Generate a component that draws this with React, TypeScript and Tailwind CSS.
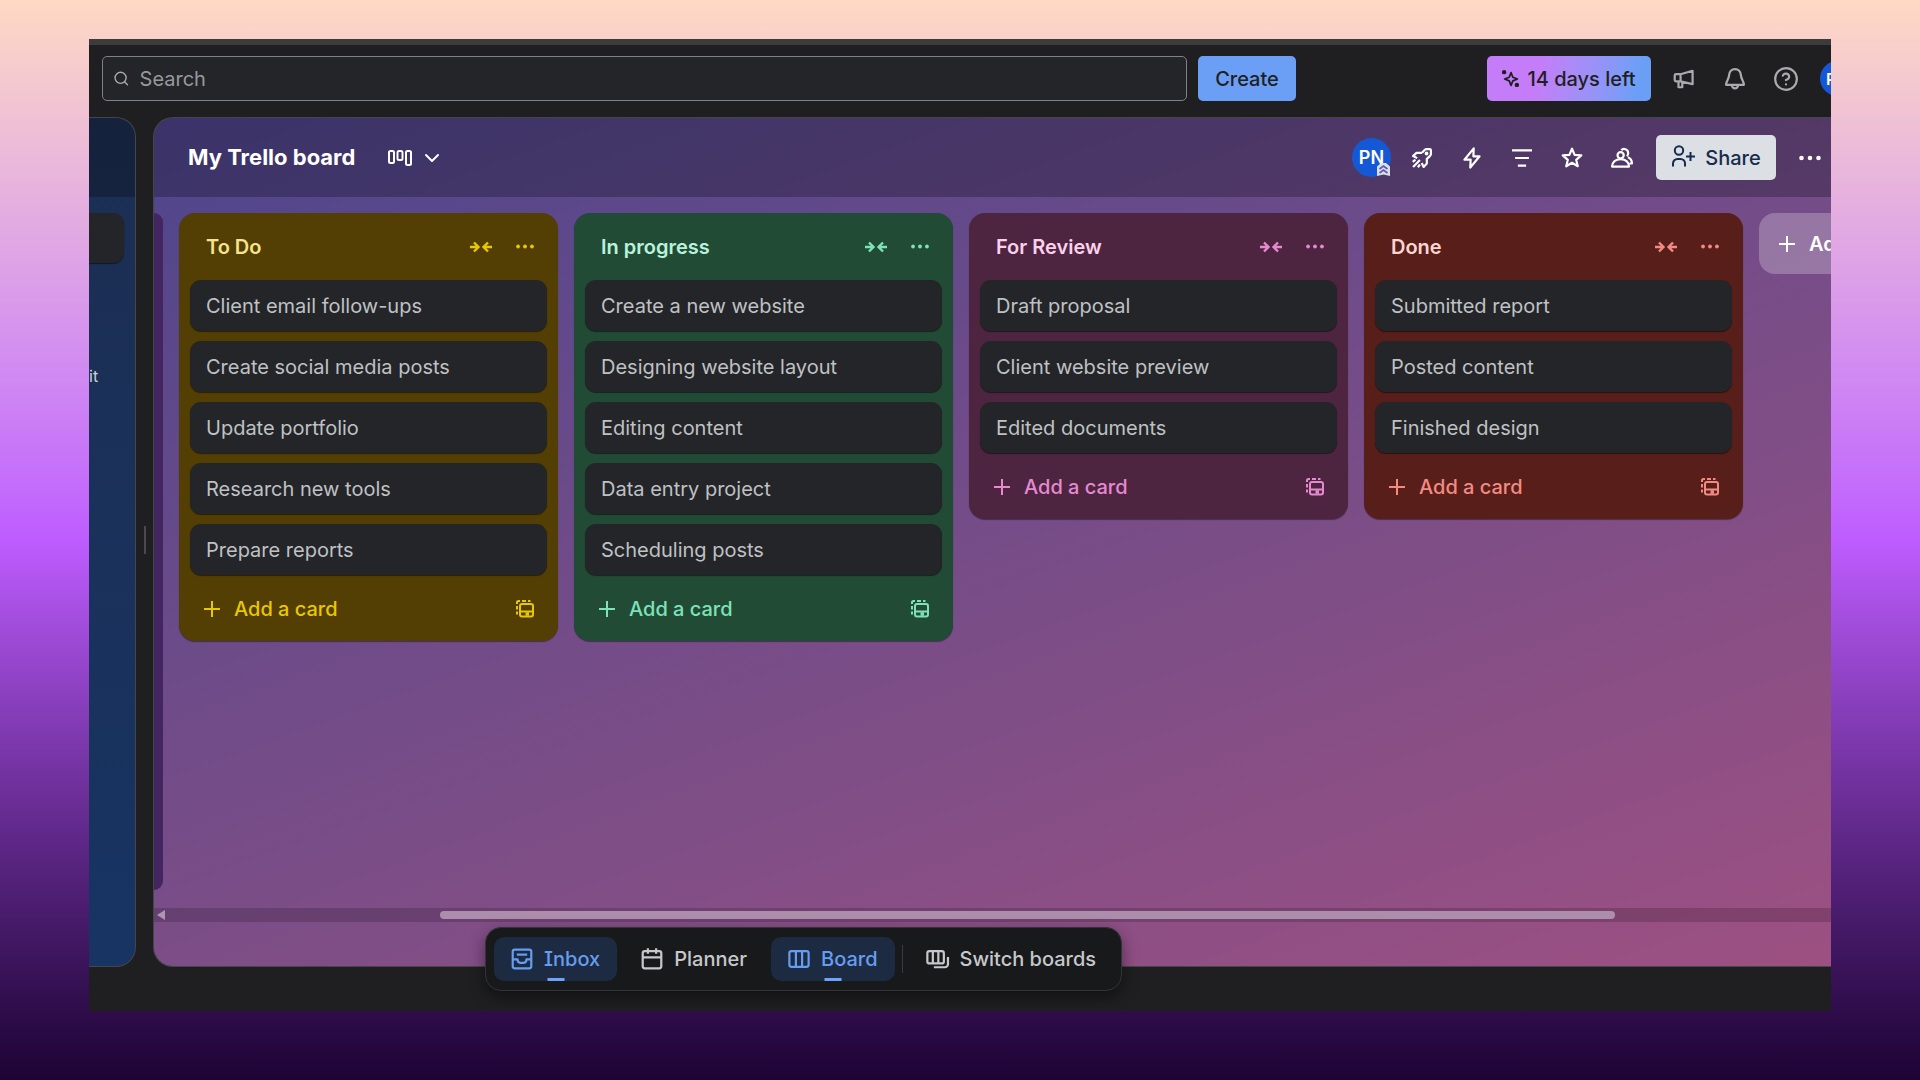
import type { ReactNode } from "react";
import { ChevronDown, CircleHelp, Search } from "lucide-react";

const lists = [
  {
    name: "To Do",
    bg: "bg-[#533f04]",
    title: "text-[#f5e489]",
    accent: "text-[#e8c800]",
    cards: [
      "Client email follow-ups",
      "Create social media posts",
      "Update portfolio",
      "Research new tools",
      "Prepare reports",
    ],
  },
  {
    name: "In progress",
    bg: "bg-[#224b36]",
    title: "text-[#baf3db]",
    accent: "text-[#7ee2b8]",
    cards: [
      "Create a new website",
      "Designing website layout",
      "Editing content",
      "Data entry project",
      "Scheduling posts",
    ],
  },
  {
    name: "For Review",
    bg: "bg-[#4d2540]",
    title: "text-[#fdd0ec]",
    accent: "text-[#e68ad0]",
    cards: ["Draft proposal", "Client website preview", "Edited documents"],
  },
  {
    name: "Done",
    bg: "bg-[#581e1a]",
    title: "text-[#ffd5d2]",
    accent: "text-[#f38b82]",
    cards: ["Submitted report", "Posted content", "Finished design"],
  },
];

function Icon({ children, className = "size-[22px]" }: { children: ReactNode; className?: string }) {
  return (
    <svg
      viewBox="0 0 16 16"
      fill="none"
      stroke="currentColor"
      strokeWidth="1.6"
      strokeLinejoin="round"
      className={`shrink-0 overflow-visible ${className}`}
      aria-hidden="true"
    >
      {children}
    </svg>
  );
}

function Dots({ className }: { className: string }) {
  return (
    <svg viewBox="0 0 22 6" fill="currentColor" className={className} aria-hidden="true">
      <circle cx="2.5" cy="3" r="2.3" />
      <circle cx="11" cy="3" r="2.3" />
      <circle cx="19.5" cy="3" r="2.3" />
    </svg>
  );
}

function PlusIcon() {
  return (
    <svg viewBox="0 0 16 16" stroke="currentColor" strokeWidth="2" className="size-4 shrink-0" aria-hidden="true">
      <path d="M8 0v16M0 8h16" />
    </svg>
  );
}

function CollapseIcon() {
  return (
    <svg viewBox="0 0 22 12" fill="none" stroke="currentColor" strokeWidth="2.4" className="h-3 w-[22px]" aria-hidden="true">
      <path d="M0 6h8.500M4 1.500 8.500 6 4 10.500M22 6h-8.500M18 1.500 13.500 6l4.500 4.500" />
    </svg>
  );
}

function TemplateIcon() {
  return (
    <svg viewBox="0 0 18 18" fill="none" stroke="currentColor" className="size-[18px]" aria-hidden="true">
      <path d="M1 4V2.500A1.500 1.500 0 0 1 2.500 1H4M6 1h4M12 1h2.500M1 6v3.500M1 11.500v3" strokeWidth="2" />
      <rect x="4" y="4" width="13" height="12.500" rx="2" strokeWidth="2" />
      <path d="M4 11.500h13" strokeWidth="2" />
      <path d="M9.500 14h3.500" strokeWidth="3.500" />
    </svg>
  );
}

function BoardList({ list }: { list: (typeof lists)[number] }) {
  return (
    <section className={`w-[379px] shrink-0 rounded-2xl px-[11px] pb-[10px] shadow-[0_1px_1px_rgba(0,0,0,0.4)] ${list.bg}`}>
      <div className="flex h-[67px] items-center pl-4">
        <h2 className={`flex-1 text-xl font-semibold ${list.title}`}>{list.name}</h2>
        <button aria-label="Collapse list" className={`flex h-11 w-[45px] items-center justify-center ${list.accent}`}>
          <CollapseIcon />
        </button>
        <button aria-label="List actions" className={`flex h-11 w-11 items-center justify-center ${list.accent}`}>
          <Dots className="h-[5px] w-[18px]" />
        </button>
      </div>
      <ul className="flex flex-col gap-[10px]">
        {list.cards.map((card) => (
          <li
            key={card}
            className="flex h-[51px] items-center rounded-[11px] bg-[#242528] px-4 text-xl text-[#bfc1c4] shadow-[0_1px_1px_rgba(0,0,0,0.5)]"
          >
            {card}
          </li>
        ))}
      </ul>
      <div className={`mt-[11px] flex h-[45px] items-center ${list.accent}`}>
        <button className="flex h-full flex-1 items-center gap-[14px] pl-[14px] text-xl font-medium">
          <PlusIcon />
          Add a card
        </button>
        <button aria-label="Create from template" className="flex h-full w-11 items-center justify-center">
          <TemplateIcon />
        </button>
      </div>
    </section>
  );
}

function TopBar() {
  return (
    <header className="-mr-6 flex h-[72px] shrink-0 items-center pb-[5px] pl-[13px] text-[#a9abaf]">
      <label className="flex h-[45px] flex-1 items-center gap-[10px] rounded-[5px] border border-[#7e8188] bg-[#242528] px-[10px]">
        <Search className="size-[17px]" strokeWidth={2} />
        <input
          type="text"
          aria-label="Search"
          placeholder="Search"
          className="w-full bg-transparent text-xl outline-none placeholder:text-[#96999e]"
        />
      </label>
      <button className="ml-[11px] h-[45px] w-[98px] rounded-[5px] bg-[#6b9ff6] text-xl font-medium text-[#1f1f21]">
        Create
      </button>
      <button className="ml-[191px] flex h-[45px] w-[164px] items-center justify-center gap-2 rounded-[5px] bg-linear-100 from-[#c57cf8] from-30% to-[#6b9ff6] to-90% text-xl font-medium text-[#1f1f21]">
        <Icon className="size-[17px]">
          <path d="M8.500 2.500l1.700 4.300 4.300 1.700-4.300 1.700-1.700 4.300-1.700-4.300-4.300-1.700 4.300-1.700z" />
          <circle cx="2" cy="2" r="1.300" fill="currentColor" />
          <circle cx="14" cy="14" r="1.300" fill="currentColor" />
        </Icon>
        14 days left
      </button>
      <button aria-label="What's new" className="ml-2 flex w-[50px] justify-center">
        <Icon>
          <path d="M5.500 4.500 14.250 2v9.750L5.500 9.750H2.250a1 1 0 0 1-1-1V5.500a1 1 0 0 1 1-1zM5.500 4.500v5.250M4 10v4h2.750v-3.750" />
        </Icon>
      </button>
      <button aria-label="Notifications" className="flex w-[51px] justify-center">
        <Icon>
          <path d="M8 .750C5.500.750 3.900 2.600 3.750 5 3.600 8 1.500 9.750 1.500 12.250h13C14.500 9.750 12.400 8 12.250 5 12.100 2.600 10.500.750 8 .750z" />
          <path d="M5.750 12.500a2.250 2.250 0 0 0 4.500 0" />
        </Icon>
      </button>
      <button aria-label="Help" className="flex w-[51px] justify-center">
        <CircleHelp className="size-[26px]" strokeWidth={2} />
      </button>
      <button
        aria-label="Account"
        className="ml-[9px] flex size-[35px] shrink-0 items-center rounded-full bg-[#1558d6] pl-[6px] text-base font-semibold text-white"
      >
        PN
      </button>
    </header>
  );
}

function BoardHeader() {
  return (
    <div className="flex h-[79px] shrink-0 items-center bg-black/25 pl-[34px] text-white">
      <h1 className="text-[22px] font-bold">My Trello board</h1>
      <button aria-label="Views" className="ml-[33px] flex items-center gap-2">
        <svg viewBox="0 0 24 18" fill="none" stroke="currentColor" strokeWidth="2" className="h-[18px] w-6" aria-hidden="true">
          <rect x="1" y="2" width="5" height="12" rx="1.500" />
          <rect x="9.500" y="2" width="5" height="9" rx="1.500" />
          <rect x="18" y="2" width="5" height="14" rx="1.500" />
        </svg>
        <ChevronDown className="size-6" strokeWidth={2} />
      </button>

      <div className="ml-auto flex items-center">
        <div className="relative mr-[6px] flex size-[39px] items-center justify-center rounded-full bg-[#1558d6] text-lg font-semibold">
          PN
          <svg viewBox="0 0 13 13" className="absolute right-[1px] bottom-[1px] size-[13px]" aria-hidden="true">
            <path d="M0 3.500 4 0h5l4 3.500V13L6.500 11.500 0 13z" fill="#dcdfe8" />
            <path d="M2.500 6 6.500 3l4 3M2.500 10l4-3 4 3" fill="none" stroke="#5e5bb5" strokeWidth="1.700" />
          </svg>
        </div>
        <button aria-label="Power-Ups" className="flex w-[50px] justify-center">
          <Icon>
            <path d="M8 4.250 9.700 2.300A2 2 0 0 1 11.200 1.500h2.300a1 1 0 0 1 1 1v2.600a2 2 0 0 1-.8 1.500l-2.200 2V12L9.200 14.500 7.800 11.600M8 4.250H4L1.500 6.600l3 1.500" />
            <path d="M1.500 14.500 6.500 9.500M1.250 10.750l2-1.500M5 14.750l1.500-2" />
            <circle cx="11.300" cy="4.700" r=".6" fill="currentColor" />
          </Icon>
        </button>
        <button aria-label="Automation" className="flex w-[50px] justify-center">
          <Icon>
            <path d="M9.250 1 2.500 9.250H7L6.750 15l6.750-8.250H9z" />
          </Icon>
        </button>
        <button aria-label="Filter" className="flex w-[50px] justify-center">
          <Icon>
            <path d="M.750 2.500h14.500M3 8h10M5 13.500h6" />
          </Icon>
        </button>
        <button aria-label="Star board" className="flex w-[50px] justify-center">
          <Icon>
            <path d="m8 1.250 1.900 4.500 4.850.4-3.700 3.150 1.150 4.700L8 11.500 3.800 14l1.150-4.700-3.700-3.150 4.850-.4z" />
          </Icon>
        </button>
        <button aria-label="Visibility" className="flex w-[50px] justify-center">
          <Icon>
            <circle cx="7" cy="6" r="2.250" />
            <path d="M.750 14.250C.900 11.200 3 8.750 7 8.750s6 2.450 6.100 5.500zM7.500 2.300c1.400-1.600 5-1 5 2.200 0 1-.4 1.700-1 2.200M12.300 7.500c1.900.8 2.950 2.500 2.950 4.500H13.500" />
          </Icon>
        </button>
        <button className="ml-[9px] flex h-[45px] w-[120px] items-center justify-center gap-[10px] rounded-[5px] bg-[#dcdfe4] text-xl font-medium text-[#172b4d]">
          <svg viewBox="0 0 24 24" fill="none" stroke="currentColor" strokeWidth="2" className="mb-1 size-6" aria-hidden="true">
            <circle cx="8" cy="6.500" r="4.200" />
            <path d="M2 22.500v-3a4.500 4.500 0 0 1 4.500-4.500h3a4.500 4.500 0 0 1 4.500 4.500v3M19.500 8v9M15 12.500h9" />
          </svg>
          Share
        </button>
        <button aria-label="Board menu" className="ml-[13px] flex w-[42px] justify-center">
          <Dots className="h-[6px] w-[22px]" />
        </button>
      </div>
    </div>
  );
}

function NavButton({ label, active, children }: { label: string; active?: boolean; children: ReactNode }) {
  return (
    <button
      className={`relative flex h-[44px] items-center gap-[11px] rounded-[10px] px-[17px] text-xl font-medium ${
        active ? "bg-[#1c2b41] text-[#669df1]" : "text-[#c6c8cb]"
      }`}
    >
      {children}
      {label}
      {active && <span className="absolute bottom-0 left-1/2 h-[3px] w-[17px] -translate-x-1/2 bg-[#6ea3fa]" />}
    </button>
  );
}

function BottomNav() {
  return (
    <nav className="absolute bottom-[20px] left-[396px] flex items-center gap-[7px] rounded-2xl border border-[#333437] bg-[#18191b] px-2 py-[9px] shadow-[0_6px_16px_rgba(0,0,0,0.45)] [font-feature-settings:'cv08']">
      <NavButton label="Inbox" active>
        <Icon>
          <rect x="1.250" y="1.250" width="13.500" height="13.500" rx="1.500" />
          <path d="M4.250 4.750h7.500M1.250 8.250h3.500c0 1.600.9 2.500 2 2.500h2.500c1.100 0 2-.9 2-2.500h3.500" />
        </Icon>
      </NavButton>
      <NavButton label="Planner">
        <Icon>
          <rect x="1.250" y="2.250" width="13.500" height="12.500" rx="1.500" />
          <path d="M1.250 6.750h13.500M5 .25v4M11 .25v4" />
        </Icon>
      </NavButton>
      <NavButton label="Board" active>
        <Icon>
          <rect x="1" y="2.250" width="14" height="11.500" rx="1.500" />
          <path d="M5.750 2.250v11.500M10.250 2.250v11.500" />
        </Icon>
      </NavButton>
      <span className="h-7 w-px bg-[#3a3b3e]" />
      <NavButton label="Switch boards">
        <Icon>
          <rect x=".25" y="2.250" width="12" height="9" rx="1.500" />
          <path d="M4.250 2.250v9M8.250 2.250v9M5 14h8a2.250 2.250 0 0 0 2.250-2.250V6.500" />
        </Icon>
      </NavButton>
    </nav>
  );
}

export default function App() {
  return (
    <div className="flex h-screen bg-linear-to-b from-[#ffd9c3] via-[#be5cff] to-[#1d0434] px-[89px] pt-[39px] pb-[69px] font-['Inter',sans-serif]">
      <main className="relative flex min-w-0 flex-1 flex-col overflow-hidden border-t-[6px] border-[#3c3c3c] bg-[#1f1f21]">
        <TopBar />

        <div className="flex min-h-0 flex-1 pb-[44px]">
          <aside className="flex w-[47px] shrink-0 flex-col overflow-hidden rounded-r-[20px] border-y border-r border-[#44464a] bg-linear-to-b from-[#1c2e52] to-[#173463]">
            <div className="h-[79px] bg-black/25" />
            <div className="mt-4 mr-[11px] h-[50px] rounded-r-[11px] bg-[#242528] shadow-[0_1px_1px_rgba(0,0,0,0.5)]" />
            <p className="mt-[101px] mr-10 text-right text-base text-[#cecfd2]">it</p>
          </aside>

          <div className="flex w-[17px] shrink-0 items-center justify-center">
            <span className="mb-1 h-7 w-[2px] bg-[#4a4b4e]" />
          </div>

          <div className="flex min-w-0 flex-1 flex-col overflow-hidden rounded-l-[20px] border-y border-l border-[#44464a] bg-linear-160 from-[#4e458c] to-[#9d5082]">
            <BoardHeader />

            <div className="flex min-h-0 flex-1 items-start gap-4 overflow-hidden pt-4 pb-[18px]">
              <div className="w-[9px] shrink-0 self-stretch rounded-r-2xl bg-[#432660]" />
              {lists.map((list) => (
                <BoardList key={list.name} list={list} />
              ))}
              <button className="flex h-[61px] w-[379px] shrink-0 items-center gap-[14px] rounded-2xl bg-white/24 pl-5 text-xl font-semibold text-white">
                <PlusIcon />
                Add another list
              </button>
            </div>

            <div className="mb-[44px] flex h-[14px] shrink-0 items-center bg-black/17 pl-[3px] text-[#b094b4]">
              <svg viewBox="0 0 8 10" fill="currentColor" className="h-[10px] w-2" aria-hidden="true">
                <path d="M8 0v10L0 5z" />
              </svg>
              <div className="ml-[16.400%] h-2 w-[70.200%] rounded-full bg-[#ac8eac]" />
            </div>
          </div>
        </div>

        <BottomNav />
      </main>
    </div>
  );
}
